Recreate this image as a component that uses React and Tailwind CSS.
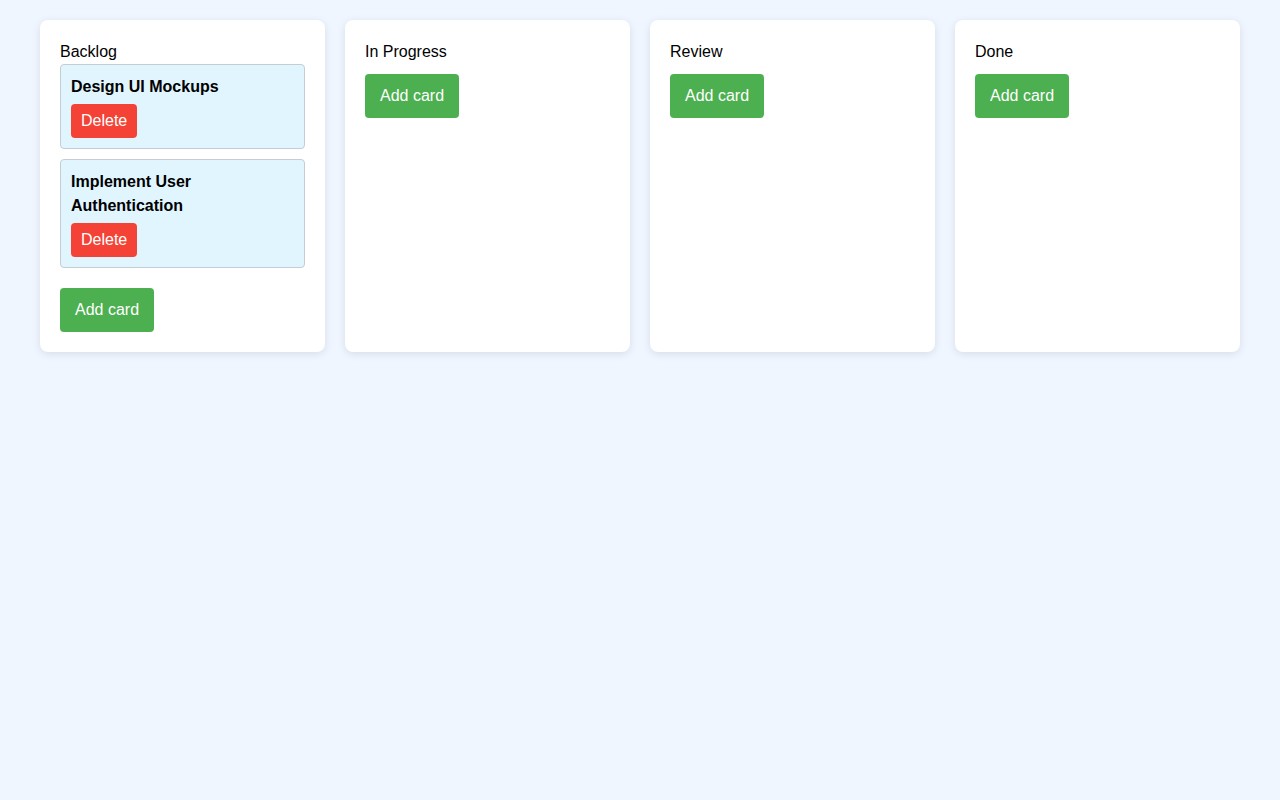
import { useState } from "react";

const COLUMNS = ["Backlog", "In Progress", "Review", "Done"];

export default function App() {
  const [cards, setCards] = useState({
    Backlog: [
      { id: 1, title: "Design UI Mockups" },
      { id: 2, title: "Implement User Authentication" },
    ],
    "In Progress": [],
    Review: [],
    Done: [],
  });

  const deleteCard = (col, id) => {
    setCards((prev) => ({ ...prev, [col]: prev[col].filter((c) => c.id !== id) }));
  };

  const addCard = (col) => {
    setCards((prev) => ({
      ...prev,
      [col]: [...prev[col], { id: Date.now(), title: "New Card" }],
    }));
  };

  return (
    <div className="min-h-screen bg-[#eff6ff] px-10 py-5 text-base leading-6 text-black font-['Liberation_Sans',Arial,sans-serif]">
      <div className="grid grid-cols-4 gap-5">
        {COLUMNS.map((col) => (
          <div key={col} className="bg-white rounded-lg p-5 shadow-[0_2px_8px_rgba(0,0,0,0.1)]">
            <h2 className="text-base font-normal">{col}</h2>
            <div>
              {cards[col].map((card) => (
                <div
                  key={card.id}
                  className="mb-2.5 p-2.5 bg-[#e1f5fe] border border-[#c5ccd3] rounded"
                >
                  <p className="font-bold mb-[5px]">{card.title}</p>
                  <button
                    onClick={() => deleteCard(col, card.id)}
                    className="bg-[#f44336] text-white px-2.5 py-[5px] rounded-sm"
                  >
                    Delete
                  </button>
                </div>
              ))}
            </div>
            <button
              onClick={() => addCard(col)}
              className="mt-2.5 bg-[#4caf50] text-white px-[15px] py-2.5 rounded"
            >
              Add card
            </button>
          </div>
        ))}
      </div>
    </div>
  );
}
